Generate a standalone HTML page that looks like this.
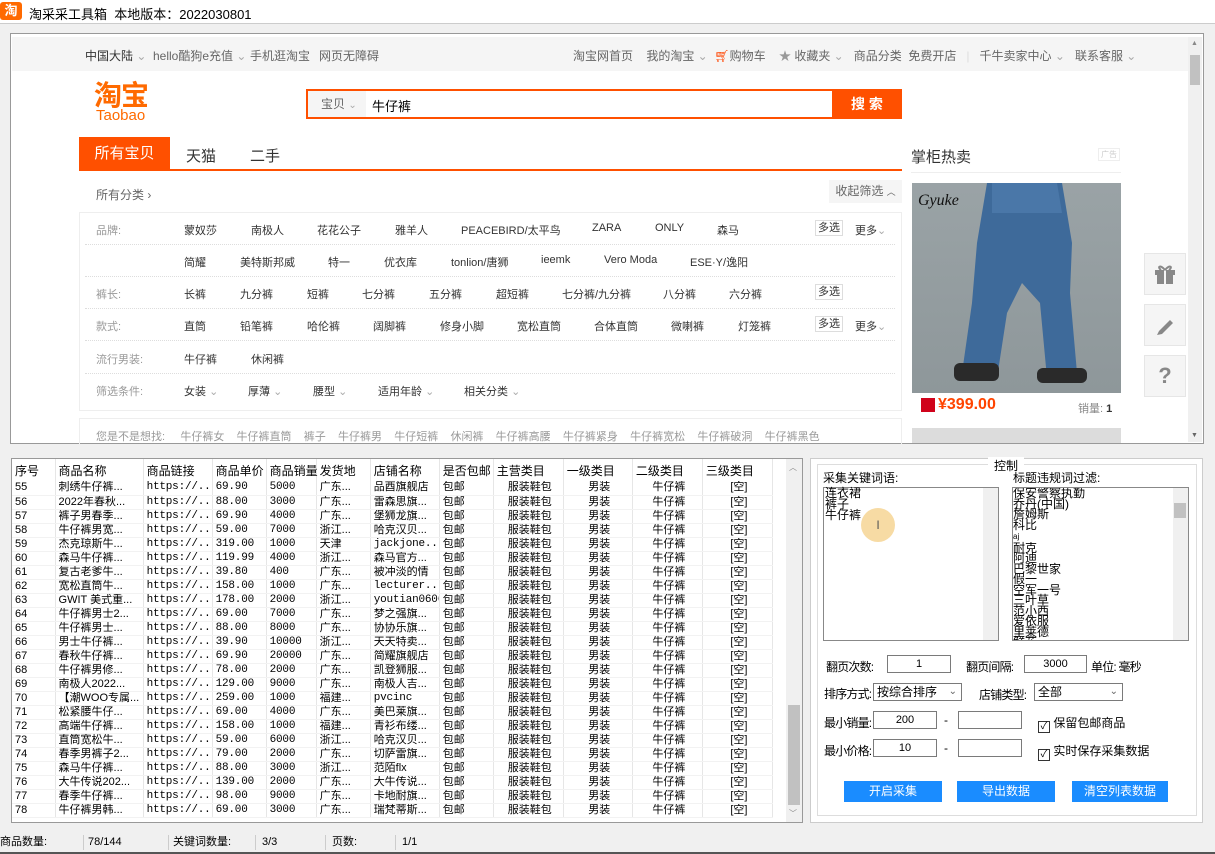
<!DOCTYPE html>
<html><head><meta charset="utf-8">
<style>
*{margin:0;padding:0;box-sizing:border-box}
body{width:1215px;height:854px;background:#f0f0f0;font-family:"Liberation Sans","Noto Sans CJK SC",sans-serif;font-size:12px;color:#000;position:relative;overflow:hidden}
.a{position:absolute;white-space:nowrap}
.g{color:#666}
.tb td{height:14px;line-height:13px;font-size:11px;padding:0 0 0 3px;border-right:1px solid #e6e6e6;border-bottom:1px solid #f2f2f2;overflow:hidden;white-space:nowrap}
.tb tr{height:14px}
.tb th{height:22px;font-weight:normal;font-size:12px;text-align:left;padding-left:3px;border-right:1px solid #e6e6e6}
.mono{font-family:"Liberation Mono",monospace;font-size:9px;letter-spacing:-0.2px}
.c{text-align:center}
.inp{position:absolute;background:#fff;border:1px solid #7a7a7a;height:18px;font-size:11px;text-align:center;line-height:16px}
.btn{position:absolute;background:#1a8cff;color:#fff;text-align:center;height:21px;line-height:21px;font-size:12px}
.sb{position:absolute;width:42px;height:42px;background:#f5f5f5;border:1px solid #e6e6e6;color:#888;text-align:center;line-height:40px;font-size:22px}
.lb{letter-spacing:-0.8px}
</style></head><body>
<div class="a" style="left:0;top:0;width:1215px;height:24px;background:#fff;border-bottom:1px solid #ccc"></div>
<div class="a" style="left:0;top:2px;width:22px;height:18px;background:#ff6a00;color:#fff;font-size:13px;font-weight:bold;line-height:18px;text-align:center;border-radius:3px">淘</div>
<div class="a" style="left:29px;top:4px;font-size:13px">淘采采工具箱&nbsp; 本地版本：2022030801</div>

<div class="a" style="left:10px;top:33px;width:1194px;height:411px;border:1px solid #999;background:#fff"></div>
<div class="a" style="left:12px;top:37px;width:1176px;height:34px;background:#f5f5f5"></div>
<div class="a" style="left:1188px;top:37px;width:14px;height:405px;background:#f0f0f0"></div>
<div class="a" style="left:1190px;top:55px;width:10px;height:30px;background:#c1c1c1"></div>
<div class="a" style="left:1191px;top:40px;font-size:7px;color:#888">▲</div>
<div class="a" style="left:1191px;top:432px;font-size:7px;color:#666">▼</div>
<div class="a" style="left:85px;top:47px;font-size:12px;color:#333">中国大陆 <span style="color:#aaa">⌄</span></div>
<div class="a g" style="left:153px;top:47px">hello酷狗e充值 <span style="color:#aaa">⌄</span></div>
<div class="a g" style="left:250px;top:47px">手机逛淘宝</div>
<div class="a g" style="left:319px;top:47px">网页无障碍</div>
<div class="a g" style="left:573px;top:47px">淘宝网首页&nbsp;&nbsp;&nbsp; 我的淘宝 <span style="color:#aaa">⌄</span>&nbsp; <span style="color:#f40">🛒︎</span>购物车&nbsp;&nbsp;&nbsp; <span style="color:#999">★</span> 收藏夹 <span style="color:#aaa">⌄</span>&nbsp;&nbsp; 商品分类&nbsp; 免费开店 &nbsp;&nbsp;<span style="color:#ddd">|</span>&nbsp;&nbsp; 千牛卖家中心 <span style="color:#aaa">⌄</span>&nbsp;&nbsp; 联系客服 <span style="color:#aaa">⌄</span></div>

<div class="a" style="left:94px;top:80px;font-size:28px;font-weight:bold;color:#ff6a00;letter-spacing:-1px;line-height:32px">淘宝</div>
<div class="a" style="left:96px;top:108px;font-size:15px;color:#ff6a00;line-height:16px">Taobao</div>
<div class="a" style="left:306px;top:89px;width:596px;height:30px;border:2px solid #ff5000;background:#fff"></div>
<div class="a" style="left:308px;top:91px;width:58px;height:26px;background:#f5f5f5;color:#666;line-height:26px;padding-left:13px">宝贝 <span style="color:#aaa;font-size:10px">⌄</span></div>
<div class="a" style="left:372px;top:96px;font-size:13px">牛仔裤</div>
<div class="a" style="left:832px;top:89px;width:70px;height:30px;background:#ff5000;color:#fff;font-size:14px;font-weight:bold;text-align:center;line-height:30px">搜 索</div>

<div class="a" style="left:79px;top:137px;width:91px;height:33px;background:#ff5000;color:#fff;font-size:15px;text-align:center;line-height:33px">所有宝贝</div>
<div class="a" style="left:186px;top:145px;font-size:15px;color:#333">天猫</div>
<div class="a" style="left:250px;top:145px;font-size:15px;color:#333">二手</div>
<div class="a" style="left:79px;top:169px;width:823px;height:2px;background:#ff5000"></div>
<div class="a g" style="left:96px;top:186px">所有分类 ›</div>
<div class="a g" style="left:829px;top:180px;width:73px;height:23px;background:#f5f5f5;line-height:23px;text-align:center">收起筛选 <span style="font-size:9px">︿</span></div>
<div class="a" style="left:911px;top:146px;font-size:15px;color:#333">掌柜热卖</div>
<div class="a" style="left:1098px;top:148px;width:22px;height:13px;border:1px solid #eee;font-size:8px;color:#ccc;text-align:center">广告</div>
<div class="a" style="left:911px;top:172px;width:210px;height:1px;background:#eee"></div>

<div class="a" style="left:79px;top:212px;width:823px;height:199px;border:1px solid #eee"></div>
<div class="a" style="left:85px;top:244px;width:810px;border-top:1px dotted #ddd"></div>
<div class="a" style="left:85px;top:276px;width:810px;border-top:1px dotted #ddd"></div>
<div class="a" style="left:85px;top:308px;width:810px;border-top:1px dotted #ddd"></div>
<div class="a" style="left:85px;top:340px;width:810px;border-top:1px dotted #ddd"></div>
<div class="a" style="left:85px;top:373px;width:810px;border-top:1px dotted #ddd"></div>
<div style="font-size:11px;color:#333">
<div class="a" style="left:96px;top:222px;color:#999">品牌:</div>
<div class="a" style="left:184px;top:222px">蒙奴莎</div><div class="a" style="left:251px;top:222px">南极人</div><div class="a" style="left:317px;top:222px">花花公子</div><div class="a" style="left:395px;top:222px">雅羊人</div><div class="a" style="left:461px;top:222px">PEACEBIRD/太平鸟</div><div class="a" style="left:592px;top:222px">ZARA</div><div class="a" style="left:655px;top:222px">ONLY</div><div class="a" style="left:717px;top:222px">森马</div>
<div class="a" style="left:184px;top:254px">简耀</div><div class="a" style="left:240px;top:254px">美特斯邦威</div><div class="a" style="left:328px;top:254px">特一</div><div class="a" style="left:384px;top:254px">优衣库</div><div class="a" style="left:451px;top:254px">tonlion/唐狮</div><div class="a" style="left:541px;top:254px">ieemk</div><div class="a" style="left:604px;top:254px">Vero Moda</div><div class="a" style="left:690px;top:254px">ESE·Y/逸阳</div>
<div class="a" style="left:96px;top:286px;color:#999">裤长:</div>
<div class="a" style="left:184px;top:286px">长裤</div><div class="a" style="left:240px;top:286px">九分裤</div><div class="a" style="left:307px;top:286px">短裤</div><div class="a" style="left:362px;top:286px">七分裤</div><div class="a" style="left:429px;top:286px">五分裤</div><div class="a" style="left:496px;top:286px">超短裤</div><div class="a" style="left:562px;top:286px">七分裤/九分裤</div><div class="a" style="left:663px;top:286px">八分裤</div><div class="a" style="left:729px;top:286px">六分裤</div>
<div class="a" style="left:96px;top:318px;color:#999">款式:</div>
<div class="a" style="left:184px;top:318px">直筒</div><div class="a" style="left:240px;top:318px">铅笔裤</div><div class="a" style="left:307px;top:318px">哈伦裤</div><div class="a" style="left:373px;top:318px">阔脚裤</div><div class="a" style="left:440px;top:318px">修身小脚</div><div class="a" style="left:517px;top:318px">宽松直筒</div><div class="a" style="left:594px;top:318px">合体直筒</div><div class="a" style="left:671px;top:318px">微喇裤</div><div class="a" style="left:738px;top:318px">灯笼裤</div>
<div class="a" style="left:96px;top:351px;color:#999">流行男装:</div>
<div class="a" style="left:184px;top:351px">牛仔裤</div><div class="a" style="left:251px;top:351px">休闲裤</div>
<div class="a" style="left:96px;top:383px;color:#999">筛选条件:</div>
<div class="a" style="left:184px;top:383px">女装 <span style="color:#aaa">⌄</span></div><div class="a" style="left:248px;top:383px">厚薄 <span style="color:#aaa">⌄</span></div><div class="a" style="left:313px;top:383px">腰型 <span style="color:#aaa">⌄</span></div><div class="a" style="left:378px;top:383px">适用年龄 <span style="color:#aaa">⌄</span></div><div class="a" style="left:464px;top:383px">相关分类 <span style="color:#aaa">⌄</span></div>
<div class="a" style="left:815px;top:220px;border:1px solid #ddd;padding:0 2px;line-height:14px">多选</div><div class="a" style="left:855px;top:222px">更多<span style="color:#aaa">⌄</span></div>
<div class="a" style="left:815px;top:284px;border:1px solid #ddd;padding:0 2px;line-height:14px">多选</div>
<div class="a" style="left:815px;top:316px;border:1px solid #ddd;padding:0 2px;line-height:14px">多选</div><div class="a" style="left:855px;top:318px">更多<span style="color:#aaa">⌄</span></div>
</div>
<div class="a" style="left:79px;top:418px;width:823px;height:26px;border:1px solid #eee;border-bottom:none"></div>
<div class="a" style="left:96px;top:428px;font-size:11px;color:#999">您是不是想找:&nbsp;&nbsp;&nbsp;&nbsp;&nbsp;牛仔裤女&nbsp;&nbsp;&nbsp; 牛仔裤直筒&nbsp;&nbsp;&nbsp; 裤子&nbsp;&nbsp;&nbsp; 牛仔裤男&nbsp;&nbsp;&nbsp; 牛仔短裤&nbsp;&nbsp;&nbsp; 休闲裤&nbsp;&nbsp;&nbsp; 牛仔裤高腰&nbsp;&nbsp;&nbsp; 牛仔裤紧身&nbsp;&nbsp;&nbsp; 牛仔裤宽松&nbsp;&nbsp;&nbsp; 牛仔裤破洞&nbsp;&nbsp;&nbsp; 牛仔裤黑色</div>

<div class="a" style="left:912px;top:183px;width:209px;height:210px;background:linear-gradient(#9aa3a6,#8e979a)">
<svg width="209" height="210"><path d="M75 0 L150 0 L160 60 L158 110 L165 190 L135 195 L128 120 L110 100 L95 130 L85 195 L50 190 L60 120 L65 60Z" fill="#3e6a9a"/><path d="M80 0 L145 0 L150 30 L80 30Z" fill="#4a77a8"/><rect x="42" y="180" width="45" height="18" rx="6" fill="#2a2a2a"/><rect x="125" y="185" width="50" height="15" rx="6" fill="#2a2a2a"/><text x="6" y="22" font-family="Liberation Serif" font-style="italic" font-size="16" fill="#111">Gyuke</text></svg>
</div>
<div class="a" style="left:912px;top:393px;width:209px;height:25px;background:#fff"></div>
<div class="a" style="left:921px;top:398px;width:14px;height:14px;background:#d0021b"></div>
<div class="a" style="left:938px;top:396px;font-size:16px;font-weight:bold;color:#f40">¥399.00</div>
<div class="a" style="left:1078px;top:400px;font-size:11px;color:#888">销量: <b style="color:#333">1</b></div>
<div class="a" style="left:912px;top:428px;width:209px;height:15px;background:#dcdcdc"></div>
<div class="sb" style="left:1144px;top:253px"><svg width="22" height="20" style="margin-top:10px"><rect x="1" y="6" width="20" height="5" fill="#888"/><rect x="3" y="11" width="16" height="9" fill="#888"/><rect x="10" y="6" width="2" height="14" fill="#f5f5f5"/><path d="M11 6 C6 0 3 3 7 6 M11 6 C16 0 19 3 15 6" stroke="#888" fill="none" stroke-width="2"/></svg></div>
<div class="sb" style="left:1144px;top:304px"><svg width="20" height="20" style="margin-top:10px"><path d="M4 16 L15 5 L18 8 L7 19Z M2 20 L4 16 L7 19Z" fill="#888"/></svg></div>
<div class="sb" style="left:1144px;top:355px;font-weight:bold">?</div>

<div class="a" style="left:11px;top:458px;width:792px;height:365px;border:1px solid #999;background:#fff;overflow:hidden">
<table class="tb" style="border-collapse:collapse;table-layout:fixed;width:761px">
<colgroup><col style="width:43px"><col style="width:88px"><col style="width:69px"><col style="width:54px"><col style="width:50px"><col style="width:54px"><col style="width:69px"><col style="width:54px"><col style="width:70px"><col style="width:69px"><col style="width:70px"><col style="width:70px"></colgroup>
<tr><th>序号</th><th>商品名称</th><th>商品链接</th><th>商品单价</th><th>商品销量</th><th>发货地</th><th>店铺名称</th><th>是否包邮</th><th class="c">主营类目</th><th class="c">一级类目</th><th class="c">二级类目</th><th class="c">三级类目</th></tr>
<tbody id="tb"></tbody>
</table>
</div>
<div class="a" style="left:786px;top:459px;width:16px;height:363px;background:#f0f0f0"></div>
<div class="a" style="left:788px;top:705px;width:12px;height:100px;background:#c1c1c1"></div>
<div class="a" style="left:789px;top:462px;font-size:8px;color:#888">︿</div>
<div class="a" style="left:789px;top:808px;font-size:8px;color:#888">﹀</div>

<div class="a" style="left:810px;top:458px;width:393px;height:365px;background:#fff;border:1px solid #ccc"></div>
<div class="a" style="left:817px;top:464px;width:380px;height:352px;border:1px solid #ddd"></div>
<div class="a" style="left:988px;top:457px;background:#fff;padding:0 6px;font-size:12px">控制</div>
<div class="a" style="left:823px;top:469px">采集关键词语:</div>
<div class="a" style="left:1013px;top:469px">标题违规词过滤:</div>
<div class="a" style="left:823px;top:487px;width:176px;height:154px;border:1px solid #888;background:#fff"></div>
<div class="a" style="left:983px;top:488px;width:15px;height:152px;background:#f0f0f0"></div>
<div class="a" style="left:825px;top:488px;font-size:12px;line-height:11px">连衣裙<br>裤子<br>牛仔裤</div>
<div class="a" style="left:861px;top:508px;width:34px;height:34px;border-radius:50%;background:#f7dba4;text-align:center;line-height:34px;color:#555">I</div>
<div class="a" style="left:1012px;top:487px;width:177px;height:154px;border:1px solid #888;background:#fff;overflow:hidden"></div>
<div class="a" style="left:1173px;top:488px;width:15px;height:152px;background:#f0f0f0"></div>
<div class="a" style="left:1174px;top:503px;width:12px;height:15px;background:#c1c1c1"></div>
<div class="a" style="left:1013px;top:488px;width:160px;height:152px;overflow:hidden;font-size:12px;line-height:10.5px">保安警察执勤<br>乔丹(中国)<br>詹姆斯<br>科比<br><span style="font-size:8px">aj</span><br>耐克<br>阿迪<br>巴黎世家<br>假一<br>空军一号<br>三叶草<br>范小西<br>爱依服<br>里莱德<br>鲜花</div>
<div class="a lb" style="left:826px;top:658px">翻页次数:</div>
<div class="inp" style="left:887px;top:655px;width:64px">1</div>
<div class="a lb" style="left:966px;top:658px">翻页间隔:</div>
<div class="inp" style="left:1024px;top:655px;width:63px">3000</div>
<div class="a lb" style="left:1091px;top:658px">单位: 毫秒</div>
<div class="a lb" style="left:824px;top:685px">排序方式:</div>
<div class="inp" style="left:873px;top:683px;width:89px;text-align:left;padding-left:3px;font-size:12px">按综合排序<span style="position:absolute;right:4px;color:#666;font-size:10px">⌄</span></div>
<div class="a lb" style="left:979px;top:686px">店铺类型:</div>
<div class="inp" style="left:1034px;top:683px;width:89px;text-align:left;padding-left:3px;font-size:12px">全部<span style="position:absolute;right:4px;color:#666;font-size:10px">⌄</span></div>
<div class="a lb" style="left:824px;top:714px">最小销量:</div>
<div class="inp" style="left:873px;top:711px;width:64px">200</div>
<div class="a" style="left:944px;top:713px">-</div>
<div class="inp" style="left:958px;top:711px;width:64px"></div>
<div class="a" style="left:1038px;top:714px"><span style="display:inline-block;width:12px;height:12px;border:1px solid #333;font-size:10px;line-height:10px;text-align:center;vertical-align:-2px">✓</span> 保留包邮商品</div>
<div class="a lb" style="left:824px;top:742px">最小价格:</div>
<div class="inp" style="left:873px;top:739px;width:64px">10</div>
<div class="a" style="left:944px;top:741px">-</div>
<div class="inp" style="left:958px;top:739px;width:64px"></div>
<div class="a" style="left:1038px;top:742px"><span style="display:inline-block;width:12px;height:12px;border:1px solid #333;font-size:10px;line-height:10px;text-align:center;vertical-align:-2px">✓</span> 实时保存采集数据</div>
<div class="btn" style="left:844px;top:781px;width:98px">开启采集</div>
<div class="btn" style="left:957px;top:781px;width:98px">导出数据</div>
<div class="btn" style="left:1072px;top:781px;width:96px">清空列表数据</div>

<div class="a" style="left:0;top:833px;width:1215px;height:19px;font-size:11px;line-height:19px">
<span class="a" style="left:0">商品数量:</span><span class="a" style="left:88px">78/144</span><span class="a" style="left:173px">关键词数量:</span><span class="a" style="left:262px">3/3</span><span class="a" style="left:332px">页数:</span><span class="a" style="left:402px">1/1</span>
<span class="a" style="left:83px;top:2px;width:1px;height:15px;background:#ccc"></span><span class="a" style="left:168px;top:2px;width:1px;height:15px;background:#ccc"></span><span class="a" style="left:255px;top:2px;width:1px;height:15px;background:#ccc"></span><span class="a" style="left:325px;top:2px;width:1px;height:15px;background:#ccc"></span><span class="a" style="left:395px;top:2px;width:1px;height:15px;background:#ccc"></span>
</div>
<div class="a" style="left:0;top:852px;width:1215px;height:2px;background:#555"></div>

<script>
var d=[["刺绣牛仔裤...","69.90","5000","广东...","品酉旗舰店"],["2022年春秋...","88.00","3000","广东...","雷森思旗..."],["裤子男春季...","69.90","4000","广东...","堡狮龙旗..."],["牛仔裤男宽...","59.00","7000","浙江...","哈克汉贝..."],["杰克琼斯牛...","319.00","1000","天津","jackjone..."],["森马牛仔裤...","119.99","4000","浙江...","森马官方..."],["复古老爹牛...","39.80","400","广东...","被冲淡的情"],["宽松直筒牛...","158.00","1000","广东...","lecturer..."],["GWIT 美式重...","178.00","2000","浙江...","youtian0606"],["牛仔裤男士2...","69.00","7000","广东...","梦之强旗..."],["牛仔裤男士...","88.00","8000","广东...","协协乐旗..."],["男士牛仔裤...","39.90","10000","浙江...","天天特卖..."],["春秋牛仔裤...","69.90","20000","广东...","简耀旗舰店"],["牛仔裤男修...","78.00","2000","广东...","凯登狮服..."],["南极人2022...","129.00","9000","广东...","南极人吉..."],["【潮WOO专属...","259.00","1000","福建...","pvcinc"],["松紧腰牛仔...","69.00","4000","广东...","美巴莱旗..."],["高端牛仔裤...","158.00","1000","福建...","青衫布缕..."],["直筒宽松牛...","59.00","6000","浙江...","哈克汉贝..."],["春季男裤子2...","79.00","2000","广东...","切萨雷旗..."],["森马牛仔裤...","88.00","3000","浙江...","范陌flx"],["大牛传说202...","139.00","2000","广东...","大牛传说..."],["春季牛仔裤...","98.00","9000","广东...","卡地耐旗..."],["牛仔裤男韩...","69.00","3000","广东...","瑞梵蒂斯..."]];
var h="";for(var i=0;i<d.length;i++){var r=d[i];h+='<tr><td>'+(55+i)+'</td><td>'+r[0]+'</td><td class="mono">https://...</td><td class="mono">'+r[1]+'</td><td class="mono">'+r[2]+'</td><td>'+r[3]+'</td><td'+(/^[a-z]/.test(r[4])?' class="mono"':'')+'>'+r[4]+'</td><td>包邮</td><td class="c">服装鞋包</td><td class="c">男装</td><td class="c">牛仔裤</td><td class="c">[空]</td></tr>';}
document.getElementById("tb").innerHTML=h;
</script>
</body></html>
